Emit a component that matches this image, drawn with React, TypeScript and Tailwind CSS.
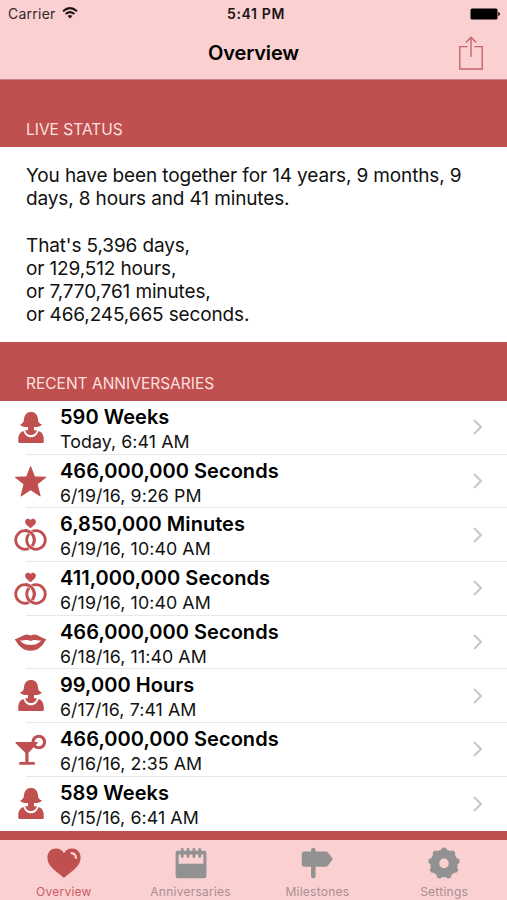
import type { ReactNode } from 'react';

type IconName = 'woman' | 'star' | 'rings' | 'lips' | 'cocktail';

const ANNIVERSARIES: { icon: IconName; title: string; date: string }[] = [
  { icon: 'woman', title: '590 Weeks', date: 'Today, 6:41 AM' },
  { icon: 'star', title: '466,000,000 Seconds', date: '6/19/16, 9:26 PM' },
  { icon: 'rings', title: '6,850,000 Minutes', date: '6/19/16, 10:40 AM' },
  { icon: 'rings', title: '411,000,000 Seconds', date: '6/19/16, 10:40 AM' },
  { icon: 'lips', title: '466,000,000 Seconds', date: '6/18/16, 11:40 AM' },
  { icon: 'woman', title: '99,000 Hours', date: '6/17/16, 7:41 AM' },
  { icon: 'cocktail', title: '466,000,000 Seconds', date: '6/16/16, 2:35 AM' },
  { icon: 'woman', title: '589 Weeks', date: '6/15/16, 6:41 AM' },
];

const ICONS: Record<IconName, ReactNode> = {
  woman: (
    <g fill="currentColor">
      <path d="M9 7.5C9.3 2.5 12 0 16 0S22.7 2.5 23 7.5C23.2 10 24.4 11.6 27 12.8C25.4 14.8 22 15.2 19 15V18.2H21.8C21.4 21 18.8 23 16 23S10.6 21 10.2 18.2H13V15C10 15.2 6.6 14.8 5 12.8C7.6 11.6 8.8 10 9 7.5Z" />
      <path d="M7 19.4L8.6 19.2C10 23.6 13 25.2 16 25.2S22 23.6 23.4 19.2L25 19.4C27.8 21 28.8 24 28.8 28V29.4Q28.8 31 27.2 31H4.8Q3.2 31 3.2 29.4V28C3.2 24 4.2 21 7 19.4Z" />
    </g>
  ),
  star: (
    <path
      d="M15.6 .9L19.5 10.9L30.6 11.3L22 18L25 29.8L15.6 23.6L6.2 29.8L9.2 18L.6 11.3L11.7 10.9Z"
      fill="currentColor"
      stroke="currentColor"
      strokeWidth="1.2"
      strokeLinejoin="round"
    />
  ),
  rings: (
    <>
      <path d="M15.5 9.2C12.8 6.9 10.1 5.2 10.1 2.7C10.1 .8 11.5 -.2 12.9 -.2C14.1 -.2 15 .4 15.5 1.2C16 .4 16.9 -.2 18.1 -.2C19.5 -.2 20.9 .8 20.9 2.7C20.9 5.2 18.2 6.9 15.5 9.2Z" fill="currentColor" />
      <g fill="none" stroke="currentColor" strokeWidth="2.8">
        <circle cx="10" cy="21" r="9.3" />
        <path d="M14.2 27.2A9.3 9.3 0 0 0 18 29.8" stroke="#fff" strokeWidth="4" />
        <circle cx="21" cy="21" r="9.3" />
        <path d="M13 12.2A9.3 9.3 0 0 1 17.6 15.7" stroke="#fff" strokeWidth="4" />
        <path d="M10 11.7A9.3 9.3 0 0 1 18.6 24.6" />
      </g>
    </>
  ),
  lips: (
    <path
      fillRule="evenodd"
      fill="currentColor"
      d="M-.2 12.2C4 11 9 7.5 12 7.5C14 7.5 15 8.6 15.6 8.6S17.4 7.5 19.4 7.5C22.5 7.5 27 11 31.2 12.2C27.5 19 23 23.7 15.6 23.7S3.8 19 -.2 12.2ZM5 13.6C8 17.6 12 17.9 15.6 17.9S23 17.6 26.2 13.6C23 13.6 21 12.9 19 12.9S16.5 13.8 15.6 13.8S14 12.9 12 12.9S8 13.6 5 13.6Z"
    />
  ),
  cocktail: (
    <>
      <circle cx="23.8" cy="8" r="5.8" fill="none" stroke="currentColor" strokeWidth="3.1" />
      <path
        d="M1 8H22.4Q23.2 8.6 22.4 9.3L13.5 18.7V28H19Q20 28 20 29.4T19 30.8H5Q4.1 30.8 4.1 29.4T5 28H10.3V18.7L.7 9.3Q0 8.4 1 8Z"
        fill="currentColor"
      />
    </>
  ),
};

const TABS = [
  {
    label: 'Overview',
    active: true,
    icon: (
      <>
        <path d="M17 31C12 25.4 .4 20.5 .4 10.4C.4 4.8 4.4 1.4 8.8 1.4C12.6 1.4 15.6 3.4 17 6.2C18.4 3.4 21.4 1.4 25.2 1.4C29.6 1.4 33.6 4.8 33.6 10.4C33.6 20.5 22 25.4 17 31Z" fill="currentColor" />
        <path d="M24.6 6.1Q28.6 6.6 29 10.8" fill="none" stroke="#fad0d1" strokeWidth="2.2" strokeLinecap="round" />
      </>
    ),
  },
  {
    label: 'Anniversaries',
    active: false,
    icon: (
      <>
        <path fillRule="evenodd" d="M3.6 3.8H30.4Q32.4 3.8 32.4 5.8V29.2Q32.4 31.2 30.4 31.2H3.6Q1.6 31.2 1.6 29.2V5.8Q1.6 3.8 3.6 3.8ZM4.6 7.4V16.8H29.4V7.4Z" fill="currentColor" />
        <path d="M8.2 2.4V9.6M14 2.4V9.6M19.9 2.4V9.6M25.7 2.4V9.6" stroke="currentColor" strokeWidth="2.8" strokeLinecap="round" />
      </>
    ),
  },
  {
    label: 'Milestones',
    active: false,
    icon: (
      <>
        <path d="M4 4.4H26.2L27.6 5.1L32.2 11Q33 12 32.2 13L27.6 19L26.2 19.7H4Q1.8 19.7 1.8 17.5V6.6Q1.8 4.4 4 4.4Z" fill="currentColor" />
        <path d="M13.3 3V29" stroke="currentColor" strokeWidth="4.6" strokeLinecap="round" />
      </>
    ),
  },
  {
    label: 'Settings',
    active: false,
    icon: (
      <>
        <circle cx="17" cy="16.4" r="9.3" fill="none" stroke="currentColor" strokeWidth="9" />
        {Array.from({ length: 9 }, (_, i) => (
          <circle key={i} cx="17" cy="3.4" r="2.8" fill="currentColor" transform={`rotate(${i * 40} 17 16.4)`} />
        ))}
      </>
    ),
  },
];

function StatusBar() {
  return (
    <div className="grid h-[27px] grid-cols-[1fr_auto_1fr] items-center">
      <div className="flex items-center gap-[6px] pl-2 text-[14px] tracking-[0.25px] text-[#33282a]">
        Carrier
        <svg width="16" height="12" viewBox="0 0 16 12" className="-mt-[2px]" fill="none" stroke="#1d1516" strokeWidth="2">
          <path d="M1 4.2Q8-2 15 4.2M3.6 7Q8 3.2 12.4 7" />
          <path d="M5.6 9Q8 7.2 10.4 9L8 11.6Z" fill="#1d1516" stroke="none" />
        </svg>
      </div>
      <div className="pl-[5px] text-[14px] font-semibold tracking-[0.65px] text-[#1d1516]">5:41 PM</div>
      <div className="flex justify-end pr-[7px]">
        <svg width="30" height="12" viewBox="0 0 30 12">
          <rect x="0.5" y="0.5" width="27" height="11" rx="1.5" />
          <path d="M28.3 4Q30 4.6 30 6T28.3 8Z" />
        </svg>
      </div>
    </div>
  );
}

function SectionHeader({ children, className }: { children: ReactNode; className: string }) {
  return (
    <h2 className={`flex items-end bg-[#c04f50] pl-[26px] text-[15.5px] leading-5 text-[#fce0df] ${className}`}>
      {children}
    </h2>
  );
}

export default function App() {
  return (
    <div className="flex h-[900px] w-[507px] flex-col overflow-hidden bg-[#c04f50] font-['Inter','Liberation_Sans',sans-serif] text-black">
      <header className="h-[79.5px] shrink-0 border-b border-[#c98489] bg-[#fad0d1]">
        <StatusBar />
        <div className="grid h-[51px] grid-cols-[1fr_auto_1fr] items-center">
          <div />
          <h1 className="text-[20px] font-semibold tracking-[-0.15px]">Overview</h1>
          <div className="flex justify-end pr-6">
            <svg width="24" height="34" viewBox="0 0 24 34" fill="none" stroke="#c8646c" strokeWidth="1.4">
              <path d="M8.6 10.6H.8V33H23.2V10.6H15.4M12 21V1.2M6.8 6.6L12 1.2L17.2 6.6" />
            </svg>
          </div>
        </div>
      </header>

      <SectionHeader className="h-[67.5px] shrink-0 pb-[7px]">LIVE STATUS</SectionHeader>
      <section className="h-[195px] shrink-0 bg-white pt-[16.7px] pl-[26px] text-[19px] leading-[23.3px] tracking-[-0.13px] text-[#111]">
        <p>
          You have been together for 14 years, 9 months, 9
          <br />
          days, 8 hours and 41 minutes.
        </p>
        <p className="mt-[23.3px]">
          That's 5,396 days,
          <br />
          or 129,512 hours,
          <br />
          or 7,770,761 minutes,
          <br />
          or 466,245,665 seconds.
        </p>
      </section>

      <SectionHeader className="h-[59px] shrink-0 pb-[7px]">RECENT ANNIVERSARIES</SectionHeader>
      <ul className="shrink-0 bg-white">
        {ANNIVERSARIES.map((a, i) => (
          <li key={i} className="flex h-[53.7px]">
            <div className="flex w-[26px] shrink-0 items-center pl-[15px] text-[#c04f50]">
              <svg width="32" height="32" viewBox="0 0 32 32" className="shrink-0 overflow-visible">
                {ICONS[a.icon]}
              </svg>
            </div>
            <div className={`flex flex-1 items-center pr-[25px] pl-[34px] ${i < ANNIVERSARIES.length - 1 ? 'border-b border-[#e9e7e8]' : ''}`}>
              <div className="flex-1 self-start pt-[3px]">
                <div className="text-[20px] leading-[26px] font-semibold tracking-[0.04px]">{a.title}</div>
                <div className="text-[17.8px] leading-[23px] tracking-[0.08px] text-[#111]">{a.date}</div>
              </div>
              <svg width="9" height="16" viewBox="0 0 9 16" fill="none" stroke="#c7c7cb" strokeWidth="2">
                <path d="M1 1L8 8L1 15" />
              </svg>
            </div>
          </li>
        ))}
      </ul>

      <nav className="mt-auto grid h-[60px] shrink-0 grid-cols-4 bg-[#fad0d1] pt-[7px]">
        {TABS.map((tab) => (
          <div key={tab.label} className={`flex flex-col items-center pl-px ${tab.active ? 'text-[#c04f50]' : 'text-[#929292]'}`}>
            <svg width="34" height="34" viewBox="0 0 34 34">{tab.icon}</svg>
            <span className={`mt-[3px] text-[12px] leading-4 tracking-[0.25px] ${tab.active ? 'text-[#cc5c66]' : 'text-[#a98f91]'}`}>{tab.label}</span>
          </div>
        ))}
      </nav>
    </div>
  );
}
